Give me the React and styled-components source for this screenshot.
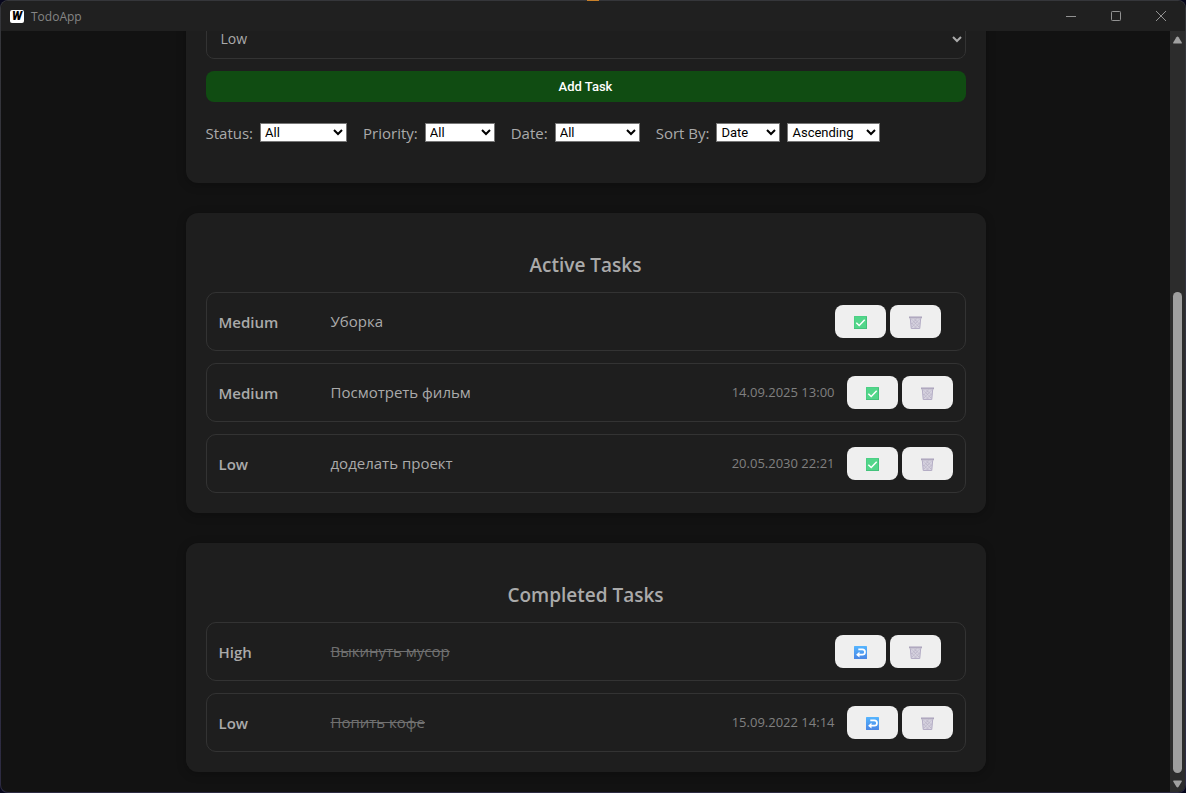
import React, { useState } from 'react';
import styled, { createGlobalStyle } from 'styled-components';

const GlobalStyle = createGlobalStyle`
  * { box-sizing: border-box; }
  body {
    margin: 0;
    background: #07071c;
    color: #aaaaaa;
    font-family: 'Segoe UI', 'Open Sans', 'Noto Sans', sans-serif;
    font-size: 15px;
    line-height: 21px;
  }
`;

const Frame = styled.div`
  height: 100vh;
  padding: 1px;
  border-radius: 8px;
  background:
    linear-gradient(#c8802a, #c8802a) 50% 0 / 12px 1px no-repeat,
    linear-gradient(#35363a, #2d2b42);
`;

const Window = styled.div`
  display: flex;
  flex-direction: column;
  height: 100%;
  overflow: hidden;
  border-radius: 7px;
  background: #121212;
`;

const TitleBar = styled.header`
  display: flex;
  flex: none;
  align-items: center;
  height: 30px;
  padding: 0 2px 0 9px;
  background: #202020;
`;

const Logo = styled.span`
  width: 14px;
  height: 13px;
  margin-right: 7px;
  border-radius: 2px;
  background: #ffffff;
  color: #000000;
  font: italic 900 12px/13px Roboto, sans-serif;
  text-align: center;
`;

const AppName = styled.span`
  flex: 1;
  color: #858585;
  font-size: 12px;
`;

const WindowButton = styled.button`
  display: grid;
  place-items: center;
  width: 45px;
  height: 30px;
  padding: 0;
  border: 0;
  background: none;
  color: #929292;
`;

const Body = styled.div`
  display: flex;
  flex: 1;
  min-height: 0;
`;

const Viewport = styled.main`
  flex: 1;
  overflow: hidden;
  padding: 0 16px;
`;

const Column = styled.div`
  display: flex;
  flex-direction: column;
  gap: 30px;
  max-width: 800px;
  margin: 0 auto;
`;

const ScrollTrack = styled.div`
  display: flex;
  flex-direction: column;
  align-items: center;
  width: 15px;
  padding: 5px 0 4px;
  background: #2c2c2c;
`;

const ScrollSpace = styled.div`
  flex: 248;
`;

const ScrollThumb = styled.div`
  flex: 482;
  width: 9px;
  margin-bottom: 7px;
  border-radius: 5px;
  background: #9f9f9f;
`;

const Card = styled.section`
  padding: 20px;
  border-radius: 12px;
  background: #1e1e1e;
  box-shadow: 0 2px 10px rgba(0, 0, 0, 0.25);
`;

/* Scrolled so that its upper part lies above the viewport. */
const FormCard = styled(Card)`
  margin-top: -32px;
  padding-bottom: 39px;
`;

const PriorityField = styled.select`
  display: block;
  width: 100%;
  height: 40px;
  padding: 0 0 2px 10px;
  border: 1px solid #333333;
  border-radius: 8px;
  background: #1e1e1e;
  color: #aaaaaa;
  font: 14px 'Segoe UI', 'Open Sans', 'Noto Sans', sans-serif;
`;

const AddButton = styled.button`
  display: block;
  width: 100%;
  height: 31px;
  margin-top: 12px;
  border: 0;
  border-radius: 8px;
  background: #104c12;
  color: #ffffff;
  font: 500 13px Roboto, sans-serif;
`;

const Filters = styled.div`
  display: flex;
  flex-wrap: wrap;
  gap: 16px;
  margin-top: 19px;
`;

const FilterGroup = styled.div`
  display: flex;
  align-items: center;
  gap: 7px;
`;

const FilterLabel = styled.label`
  padding-top: 2px;
`;

const FilterSelect = styled.select`
  width: ${({ $width }) => $width}px;
  height: 19px;
  padding: 0;
  border: 1px solid #767676;
  border-radius: 0;
  background: #ffffff;
  color: #000000;
  font: 13px Roboto, sans-serif;
`;

const Heading = styled.h2`
  margin: 18px 0 12px;
  font-size: 19px;
  font-weight: 600;
  line-height: 29px;
  text-align: center;
`;

const TaskList = styled.ul`
  display: flex;
  flex-direction: column;
  gap: 12px;
  margin: 0;
  padding: 0;
  list-style: none;
`;

const TaskRow = styled.li`
  display: flex;
  align-items: center;
  gap: 12px;
  padding: 12px;
  border: 1px solid #333333;
  border-radius: 10px;
`;

const Priority = styled.span`
  width: 100px;
  padding-top: 2px;
  font-weight: 600;
`;

const TaskName = styled.span`
  flex: 1;
  color: ${({ $done }) => ($done ? '#707070' : '#aaaaaa')};
  text-decoration: ${({ $done }) => ($done ? 'line-through' : 'none')};
`;

const DueDate = styled.time`
  color: #808080;
  font-size: 13px;
`;

const Actions = styled.div`
  display: flex;
  gap: 4px;
`;

const ActionButton = styled.button`
  display: grid;
  place-items: center;
  width: 51px;
  height: 33px;
  padding: 2px 0 0;
  border: 0;
  border-radius: 8px;
  background: #efefef;
`;

const CheckIcon = () => (
  <svg width="13" height="13" viewBox="0.5 0.5 13 13" aria-hidden="true">
    <rect x="0.5" y="0.5" width="13" height="13" rx="0.6" fill="#3fbd77" />
    <rect x="0.8" y="0.8" width="11.9" height="11.9" rx="0.5" fill="#52d68a" />
    <path d="M2.8 7.2 5.7 10 11.2 4.3" fill="none" stroke="#fff" strokeWidth="1.5" />
  </svg>
);

const UndoIcon = () => (
  <svg width="13" height="13" viewBox="0.5 0.5 13 13" aria-hidden="true">
    <defs>
      <linearGradient id="undoFill" x1="0" y1="0" x2="0" y2="1">
        <stop offset="0" stopColor="#55b5ff" />
        <stop offset="1" stopColor="#4a86e4" />
      </linearGradient>
    </defs>
    <rect x="0.5" y="0.5" width="13" height="13" rx="0.6" fill="url(#undoFill)" />
    <path d="M4.8 3.8H8.8a2.7 2.7 0 0 1 0 5.4H5" fill="none" stroke="#fff" strokeWidth="1.7" />
    <path d="M2.6 9.2 6 6.3v5.8z" fill="#fff" />
  </svg>
);

const TrashIcon = () => (
  <svg width="13" height="13" viewBox="0.5 0.5 13 13" aria-hidden="true">
    <path d="M1.4 2h11.2l-1 11.3H2.4z" fill="#d6d2df" />
    <path d="M3.3 4 10.5 11.5M6 3.5l5 5M3 7.5l5 5M10.7 4 3.4 11.5M8 3.5l-5 5M11 7.5l-5 5" stroke="#a39cb4" strokeWidth="0.6" strokeDasharray="1.2 0.6" />
    <path d="M1.8 3 2.8 13h8.4l1-10" fill="none" stroke="#b4adc5" strokeWidth="1" />
    <path d="M0.5 1h13v1.8h-13z" fill="#aaa3ba" />
    <path d="M1.2 1.3h11.6" stroke="#c9c4d5" strokeWidth="0.6" />
  </svg>
);

const ScrollArrow = ({ down }) => (
  <svg width="9" height="8" viewBox="0 0 9 8" aria-hidden="true">
    <path
      d={down ? 'M0.7 0.5h7.6q.7 0 .5.9L5.6 6.7q-1.1 1.5-2.2 0L.2 1.4q-.2-.9.5-.9z' : 'M0.7 7.5h7.6q.7 0 .5-.9L5.6 1.3q-1.1-1.5-2.2 0L.2 6.6q-.2.9.5.9z'}
      fill="#a0a0a0"
    />
  </svg>
);

const filters = [
  { label: 'Status:', selects: [{ id: 'status', width: 87, options: ['All', 'Active', 'Completed'] }] },
  { label: 'Priority:', selects: [{ id: 'priority', width: 70, options: ['All', 'Low', 'Medium', 'High'] }] },
  { label: 'Date:', selects: [{ id: 'date', width: 85, options: ['All', 'Today', 'This Week', 'Overdue'] }] },
  {
    label: 'Sort By:',
    selects: [
      { id: 'sort', width: 64, options: ['Date', 'Priority'] },
      { id: 'order', width: 93, options: ['Ascending', 'Descending'] },
    ],
  },
];

const initialTasks = [
  { id: 1, priority: 'Medium', name: 'Уборка', done: false },
  { id: 2, priority: 'Medium', name: 'Посмотреть фильм', due: '14.09.2025 13:00', done: false },
  { id: 3, priority: 'Low', name: 'доделать проект', due: '20.05.2030 22:21', done: false },
  { id: 4, priority: 'High', name: 'Выкинуть мусор', done: true },
  { id: 5, priority: 'Low', name: 'Попить кофе', due: '15.09.2022 14:14', done: true },
];

function TaskSection({ title, tasks, onToggle, onDelete }) {
  return (
    <Card>
      <Heading>{title}</Heading>
      <TaskList>
        {tasks.map((task) => (
          <TaskRow key={task.id}>
            <Priority>{task.priority}</Priority>
            <TaskName $done={task.done}>{task.name}</TaskName>
            {task.due && <DueDate>{task.due}</DueDate>}
            <Actions>
              <ActionButton aria-label={task.done ? 'Restore' : 'Complete'} onClick={() => onToggle(task.id)}>
                {task.done ? <UndoIcon /> : <CheckIcon />}
              </ActionButton>
              <ActionButton aria-label="Delete" onClick={() => onDelete(task.id)}>
                <TrashIcon />
              </ActionButton>
            </Actions>
            {!task.due && <span />}
          </TaskRow>
        ))}
      </TaskList>
    </Card>
  );
}

export default function App() {
  const [tasks, setTasks] = useState(initialTasks);
  const toggle = (id) => setTasks((list) => list.map((t) => (t.id === id ? { ...t, done: !t.done } : t)));
  const remove = (id) => setTasks((list) => list.filter((t) => t.id !== id));

  return (
    <>
      <GlobalStyle />
      <Frame>
        <Window>
          <TitleBar>
            <Logo>W</Logo>
            <AppName>TodoApp</AppName>
            <WindowButton aria-label="Minimize">
              <svg width="10" height="10" viewBox="0 0 10 10"><path d="M0 5.5h10" stroke="currentColor" /></svg>
            </WindowButton>
            <WindowButton aria-label="Maximize">
              <svg width="10" height="10" viewBox="0 0 10 10"><rect x="0.5" y="0.5" width="9" height="9" rx="0.8" fill="none" stroke="currentColor" /></svg>
            </WindowButton>
            <WindowButton aria-label="Close">
              <svg width="10" height="10" viewBox="0 0 10 10"><path d="M0 0 10 10M10 0 0 10" stroke="currentColor" /></svg>
            </WindowButton>
          </TitleBar>
          <Body>
            <Viewport>
              <Column>
                <FormCard>
                  <PriorityField aria-label="Task priority">
                    <option>Low</option>
                    <option>Medium</option>
                    <option>High</option>
                  </PriorityField>
                  <AddButton>Add Task</AddButton>
                  <Filters>
                    {filters.map(({ label, selects }) => (
                      <FilterGroup key={label}>
                        <FilterLabel htmlFor={selects[0].id}>{label}</FilterLabel>
                        {selects.map(({ id, width, options }) => (
                          <FilterSelect key={id} id={id} $width={width} aria-label={id === 'order' ? 'Sort order' : undefined}>
                            {options.map((option) => <option key={option}>{option}</option>)}
                          </FilterSelect>
                        ))}
                      </FilterGroup>
                    ))}
                  </Filters>
                </FormCard>
                <TaskSection title="Active Tasks" tasks={tasks.filter((t) => !t.done)} onToggle={toggle} onDelete={remove} />
                <TaskSection title="Completed Tasks" tasks={tasks.filter((t) => t.done)} onToggle={toggle} onDelete={remove} />
              </Column>
            </Viewport>
            <ScrollTrack aria-hidden="true">
              <ScrollArrow />
              <ScrollSpace />
              <ScrollThumb />
              <ScrollArrow down />
            </ScrollTrack>
          </Body>
        </Window>
      </Frame>
    </>
  );
}
